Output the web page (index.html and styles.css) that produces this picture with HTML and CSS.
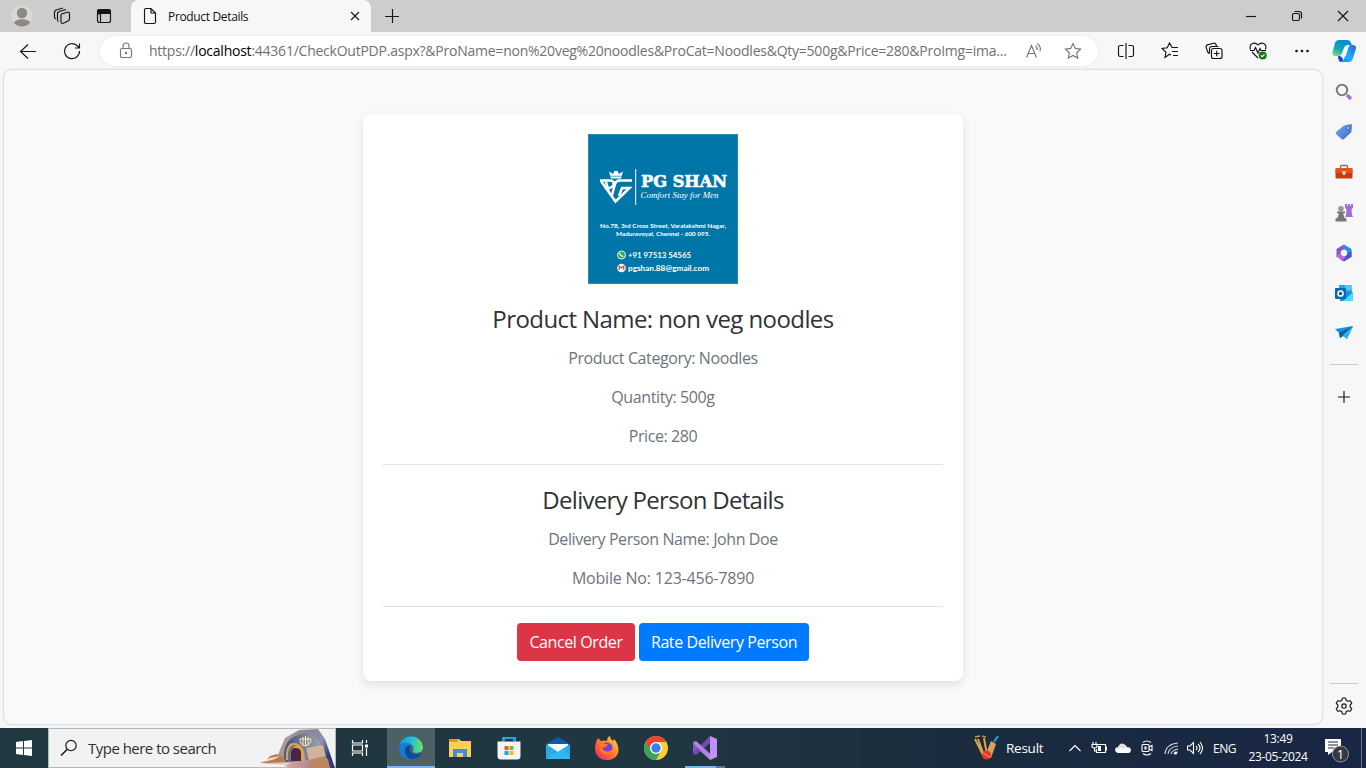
FILE: index.html
```html
<!DOCTYPE html>
<html lang="en">
<head>
<meta charset="utf-8">
<title>Product Details</title>
<link rel="stylesheet" href="styles.css">
</head>
<body>
<div class="screen">
  <header class="titlebar">
    <svg class="avatar" viewBox="0 0 22 22"><circle cx="11" cy="11" r="10.5" fill="#dad8d5"/><circle cx="11" cy="8" r="5.2" fill="#8d8883"/><path d="M3 18c1-5 15-5 16 0c-4 4.500-12 4.500-16 0z" fill="#8d8883"/></svg>
    <svg class="ico workspaces" viewBox="0 0 18 18"><path d="M8.500 7 15 5q1.500 0 1.500 1.500v6L15 14l-5 2.500q-2 0-2-1.500V8zM5.500 14.500q-1-.5-1-2V6l1.500-1.500L13 2.500M3 12q-1.500-.5-1.500-2V4.500L3 3l7-2"/></svg>
    <svg class="ico tabact" viewBox="0 0 18 18"><rect x="2.500" y="2.500" width="13" height="13" rx="2"/><path d="M3 3h12v3.500H3zM3 6h2v1H3z" fill="#111"/><path d="M5.500 6v9"/></svg>
    <div class="tab">
      <svg class="ico page" viewBox="0 0 14 18"><path d="M1.500 3q0-1.500 1.500-1.500h5l4.500 4.500v9q0 1.500-1.500 1.500H3q-1.500 0-1.500-1.500zM8 1.500V6h4.500"/></svg>
      <span class="tabtitle">Product Details</span>
      <svg class="ico close" viewBox="0 0 10 10"><path d="m1 1 8 8m0-8-8 8"/></svg>
    </div>
    <svg class="ico newtab" viewBox="0 0 14 14"><path d="M7.500 0v14M0 7.500h14"/></svg>
    <div class="wincontrols">
      <svg class="ico win" viewBox="0 0 12 12"><path d="M1 6.500h10"/></svg>
      <svg class="ico win" viewBox="0 0 12 12"><rect x="1.500" y="3.500" width="7" height="7" rx="1.500"/><path d="M3.500 1.500H8q2.500 0 2.500 2.500v4.500"/></svg>
      <svg class="ico win" viewBox="0 0 12 12"><path d="m1 1 10 10M11 1 1 11"/></svg>
    </div>
  </header>

  <div class="toolbar">
    <svg class="ico back" viewBox="0 0 18 16"><path d="M17 8.500H1.500M9 1.500l-7.500 7 7.500 7"/></svg>
    <svg class="ico reload" viewBox="0 0 18 18"><path d="M16.500 9a7.500 7.500 0 1 1-2.500-5.500L16.500 6M16.500 1.500V6H12"/></svg>
    <div class="address">
      <svg class="ico grey lock" viewBox="0 0 14 18"><rect x="1.500" y="6.500" width="11" height="9" rx="1.500"/><path d="M4 6.500V4a3 3 0 0 1 6 0v2.500"/><circle cx="7" cy="11" r=".6"/></svg>
      <span class="url">https://<b>localhost</b>:44361/CheckOutPDP.aspx?&amp;ProName=non%20veg%20noodles&amp;ProCat=Noodles&amp;Qty=500g&amp;Price=280&amp;ProImg=ima...</span>
      <svg class="ico grey read" viewBox="0 0 18 16"><path d="m1.500 14.500 5-12 5 12M3.300 10.500h6.500M10.500 3q2 1.500 1.500 4M12 .8q4.500 2.700 3 7.500"/></svg>
      <svg class="ico grey star" viewBox="0 0 18 18"><path d="m9 1.500 2.300 4.900 5.300.7-3.900 3.700 1 5.300L9 13.500l-4.700 2.600 1-5.300-3.900-3.700 5.300-.7z"/></svg>
    </div>
    <div class="tools">
      <svg class="ico" viewBox="0 0 18 18"><path d="M6.500 3.500h-3Q1.500 3.500 1.500 5v8q0 1.500 2 1.500h3m5-11h3q2 0 2 1.500v8q0 1.500-2 1.500h-3M9 1v16"/></svg>
      <svg class="ico" viewBox="0 0 18 18"><path d="m10 13-1.500-.8-4.500 3.300 1-5.200-4-3.800 5.200-.8L8.500 1 11 5.500h6M11 9.500h6M12 13.500h5"/></svg>
      <svg class="ico" viewBox="0 0 18 18"><rect x="6.500" y="6.500" width="10.500" height="10" rx="2"/><path d="M11.700 8.700V14.300M9 11.500h5.500M4.500 11.500Q3 11 2.500 9.500L1.200 5.500q-.6-2 1.300-2.600L8.500 1.200q1.800-.5 2.500 1.300l.5 1.500M4.500 11.500V7q0-2.500 2.500-2.500h6.500"/></svg>
      <svg class="ico" viewBox="0 0 18 18"><path d="m9 16-6-6M1.500 7.500C-.5 1 6-.5 9 3c3-3.500 9.500-2 7.500 4.500M1 8.500h4l1.500-3L9 11l2-4.500 1 2h5"/><circle cx="13.700" cy="13.500" r="4" fill="#107c10" stroke="none"/><path d="m12 13.500 1.300 1.200 2.200-2.400" stroke="#fff"/></svg>
      <svg class="ico" viewBox="0 0 18 18"><g fill="#111" stroke="none"><circle cx="3.500" cy="9" r="1.300"/><circle cx="9" cy="9" r="1.300"/><circle cx="14.500" cy="9" r="1.300"/></g></svg>
    </div>
    <svg class="copilot" viewBox="0 0 24 24"><defs><linearGradient id="cpa" x1="0" y1="1" x2=".5" y2="0"><stop stop-color="#8be66f"/><stop offset=".45" stop-color="#16a9b7"/><stop offset="1" stop-color="#078bd1"/></linearGradient><linearGradient id="cpb" x1="1" y1="0" x2="0" y2="1"><stop stop-color="#2569d9"/><stop offset=".6" stop-color="#20adff"/><stop offset="1" stop-color="#128cff"/></linearGradient></defs><path d="M7 1h8q3 0 4 3l1 2h-4q-3 0-4 3l-2 5q-1 3-4 3H3q-3 0-2.500-4L3 4q1-3 4-3z" fill="url(#cpa)"/><path d="M17 6h4q3.500 0 3 3.500L21 19q-1 4-4 4H9q2 0 3-3l2-5 2-6q.5-3 3-3z" fill="url(#cpb)"/><path d="M6 17h3l2 3q0 3-2 3-3-.5-3-6" fill="#174bd1"/><path d="M14 7h3l-1 3-2 6q-1 2-3 2H8q2-1 3-4l1-4q.5-2 2-3" fill="#f7f7f7"/></svg>
  </div>

  <div class="middle">
    <main class="viewport">
      <section class="card">
        <svg class="productimg" viewBox="0 0 150 150">
          <path fill="#0076a8" d="M0 0h150v150H0z"/>
          <path d="M.5.500h149v149H.500z" fill="none" stroke="#4d98bb" opacity=".6"/>
          <g fill="none" stroke="#fff" stroke-width="2.500">
            <path d="M44 46.500H31.500q-3.500 0-4.500 3.500l-3.500 13M12 46.500h9.500q5 0 4 4-1 3.500-6 3.500h-3M13 47l14.500 20.500L41.500 54H34l-3 8M18 48l3 10"/>
          </g>
          <path d="m21 37.500 4 2.500 1.500-3h3L31 40l4-2.500-2 7H23z" fill="#fff"/><path d="M22.500 42.200h11" stroke="#0076a8" stroke-width=".7"/>
          <path d="M47.700 35v36" stroke="#fff" stroke-width="1"/>
          <text x="53" y="53" class="brand" textLength="86" lengthAdjust="spacingAndGlyphs">PG SHAN</text>
          <text x="52.500" y="64" class="tagline" textLength="78" lengthAdjust="spacingAndGlyphs">Comfort Stay for Men</text>
          <text x="12" y="94" class="addr" textLength="126" lengthAdjust="spacingAndGlyphs">No.78, 3rd Cross Street, Varalakshmi Nagar,</text>
          <text x="28" y="102" class="addr" textLength="94" lengthAdjust="spacingAndGlyphs">Maduravoyal, Chennai - 600 095.</text>
          <circle cx="33.500" cy="121" r="4" fill="#29a94b" stroke="#fff" stroke-width=".9"/><path d="M31.800 119q.5 3 3.500 3.700" stroke="#fff" stroke-width="1.300" fill="none"/>
          <circle cx="33.500" cy="134" r="4.300" fill="#fff"/><path d="M31.200 136v-4l2.300 2 2.300-2v4" stroke="#db4437" stroke-width="1.200" fill="none"/>
          <text x="40" y="124" class="contact" textLength="63" lengthAdjust="spacingAndGlyphs">+91 97513 54565</text>
          <text x="40" y="136.500" class="contact" textLength="81" lengthAdjust="spacingAndGlyphs">pgshan.88@gmail.com</text>
        </svg>
        <h4 class="heading product">Product Name: non veg noodles</h4>
        <p class="detail">Product Category: Noodles</p>
        <p class="detail">Quantity: 500g</p>
        <p class="detail">Price: 280</p>
        <hr class="rule">
        <h4 class="heading delivery">Delivery Person Details</h4>
        <p class="detail">Delivery Person Name: John Doe</p>
        <p class="detail mobile">Mobile No: 123-456-7890</p>
        <hr class="rule">
        <div class="actions">
          <button class="btn danger">Cancel Order</button>
          <button class="btn primary">Rate Delivery Person</button>
        </div>
      </section>
    </main>
    <aside class="sidebar">
      <svg class="side" viewBox="0 0 18 18"><path d="m12 12 4 4" stroke="#a36bd6" stroke-width="3.200"/><circle cx="7" cy="7" r="5.200" fill="none" stroke="#7c7c7c" stroke-width="2"/></svg>
      <svg class="side" viewBox="0 0 18 18"><defs><linearGradient id="tg" x2="1" y2="1"><stop stop-color="#79a8f2"/><stop offset="1" stop-color="#3c68c9"/></linearGradient></defs><path d="m1 9 8-6.500 7-1.500q1 0 1 1l-.5 7L9 16q-1.500 1-2.500 0L1 11q-.7-1 0-2z" fill="url(#tg)"/><circle cx="12.800" cy="5" r="1.500" fill="#fff" stroke="#294fa5"/></svg>
      <svg class="side" viewBox="0 0 18 18"><path d="M5.500 5V3.500q0-1 1-1h5q1 0 1 1V5" fill="none" stroke="#777" stroke-width="1.300"/><rect x=".5" y="5" width="17" height="10.500" rx="1" fill="#c83b0d"/><path d="M1 5h16l.7 5H.3z" fill="#e65518"/><rect x="7.500" y="8" width="3" height="4" rx="1" fill="#d4dce2"/></svg>
      <svg class="side" viewBox="0 0 18 18"><path d="M10 0h2v2h1V0h2v2h1V0h2v4l-1.500 1 .5 6 1 2h-8l1-2 .5-6L10 4z" fill="#a56bd0"/><circle cx="6" cy="4.800" r="2.800" fill="#999"/><path d="M2 7.500h8v1.800H8.200L9 13l2.500 2v2.500H.500V15L3 13l.8-3.700H2z" fill="#777"/></svg>
      <svg class="side" viewBox="0 0 18 18"><path d="M9 .5 1.500 5v8.500L6 11V7l5-3z" fill="#8458cb"/><path d="m9 .5 7.500 4.500v8L12 10.500V7L7 4z" fill="#318be4"/><path d="M16.500 7v6L9 17.500 4.500 15l7.500-4.500z" fill="#4c55d0"/><path d="m1.500 12.500 4.500-6v4L11 13l-4 3.500z" fill="#bd67d9"/><path d="m9 6 3 1.700v3L9 12.500l-3-1.800v-3z" fill="#f8f8fb"/></svg>
      <svg class="side" viewBox="0 0 18 18"><path d="M4 1h13v10H4z" fill="#28a8ea"/><path d="M10 1h7v5h-7z" fill="#50c9f4"/><path d="M5 8h13v9H5z" fill="#1490df"/><path d="m18 8-10 9h10z" fill="#50d9ff"/><rect y="4" width="11" height="11" rx="1" fill="#0868b8"/><circle cx="5.500" cy="9.500" r="2.600" fill="none" stroke="#fff" stroke-width="1.500"/></svg>
      <svg class="side" viewBox="0 0 18 18"><path d="M0 5 18 2l-6 13-4-3-3 2-1-5z" fill="#1592df"/><path d="M4 9 18 2 8 12l-3 2z" fill="#075f9f"/><path d="m8 11 10-9-6 13z" fill="#2cb4ef"/></svg>
      <hr class="siderule">
      <svg class="ico sideplus" viewBox="0 0 14 14"><path d="M7 1v12M1 7h12"/></svg>
      <div class="sidebottom">
        <hr class="siderule">
        <svg class="ico gear" viewBox="0 0 18 18"><path d="M7.500 1h3l.7 2.300 1.700 1 2.400-.6 1.500 2.600L15.100 8v2l1.700 1.700-1.500 2.600-2.400-.6-1.700 1-.7 2.300h-3l-.7-2.300-1.700-1-2.400.6-1.500-2.600L2.900 10V8L1.200 6.300l1.500-2.600 2.400.6 1.700-1z" stroke-linejoin="round"/><circle cx="9" cy="9" r="2.200"/></svg>
      </div>
    </aside>
  </div>

  <footer class="taskbar">
    <div class="start"><svg viewBox="0 0 16 16"><path d="m0 2 7-1v6.500H0zM8 .900 16 0v7.500H8zM0 8.500h7V15l-7-1zM8 8.500h8V16l-8-1.100z" fill="#fff"/></svg></div>
    <div class="search">
      <svg class="ico mag" viewBox="0 0 18 18"><circle cx="11" cy="6.500" r="5.200"/><path d="M7.300 10.200 1 16.500" stroke-width="1.500"/></svg>
      <span class="searchtext">Type here to search</span>
      <svg class="art" viewBox="0 0 76 39"><defs><linearGradient id="arch" x2="1" y2=".3"><stop stop-color="#c2ab9c"/><stop offset=".5" stop-color="#8a8494"/><stop offset=".8" stop-color="#8d8fae"/><stop offset="1" stop-color="#303b78"/></linearGradient><linearGradient id="ground" x2="1"><stop stop-color="#e7c0a7"/><stop offset="1" stop-color="#a5788f"/></linearGradient><linearGradient id="inner" x2="1"><stop stop-color="#3f5285"/><stop offset="1" stop-color="#a9adb0"/></linearGradient></defs>
        <path d="M18 28 26 9 40 1l19-1 7 10 10 29H35L19 34z" fill="url(#arch)"/><path d="M25 28q0-21 19-23 15-2 20 17l2 12H27z" fill="url(#inner)"/><path d="m47 19 17-3 3 12-17 3z" fill="#d0b29d"/>
        <path d="M27 31q-1-18 9-17 10 1 10 18z" fill="#dda150"/><path d="M29 31q-1-16 8-15l-5 5v10z" fill="#6c6b91"/><path d="M32 32v-8q0-5 4-5 6 0 6 5v8z" fill="#492444"/><path d="M41 10h11m-11 0q0 6 5 7 6-1 6-7M44 8v8m2.500-9v10M49 8v8" stroke="#fff0b0" stroke-width="1" fill="none"/>
        <path d="m1 34 7-3 3-4 7-2 8 5-2 4 8 1 15-2 7 2-5 4H31l-7-4z" fill="#b77850"/><path d="m7 34 19-1 15-1 16-2 7 9H30l-4-3z" fill="url(#ground)"/><path d="m10 35 22-1-5 2zM2 34l9-5 10-2-5 3z" fill="#f4dfcc"/><path d="m47 39 7-9 12-3 7 8v4z" fill="#bd8663"/><path d="m68 25 8 14h-5z" fill="#303b78"/></svg>
    </div>
    <div class="taskview"><svg viewBox="0 0 18 18"><path d="M1.500 1v3h10V1M1.500 17v-3h10v3M1.500 6h10v6h-10zM15.500 1v3m0 5v8" stroke="#fff" fill="none" stroke-width="1.200"/><path d="M14 5.500h3v3h-3z" fill="#fff"/></svg></div>
    <div class="apps">
      <div class="app active"><svg viewBox="0 0 24 24"><defs><linearGradient id="eg" x2="1"><stop stop-color="#1597dc"/><stop offset=".55" stop-color="#28c2cd"/><stop offset="1" stop-color="#70e84c"/></linearGradient></defs><circle cx="12" cy="12" r="12" fill="#137ed4"/><path d="M1 8C4-2 22-3 24 11q0 6-7 6-5 0-3-3c2-6-6-9-13-6z" fill="url(#eg)"/><path d="M6 15q0-6 6-6c-3 6 2 12 11 8-4 8-17 9-17-2z" fill="#0d4b95"/><path d="M12 9c-3 6 1 11 8 9l4-1V12q0 5-7 5-4 0-3-3 1-3-2-5z" fill="#4d6066"/></svg></div>
      <div class="app"><svg viewBox="0 0 24 24"><path d="M1 3h10l2 2h10v16H1z" fill="#ffcf55"/><path d="M1 3h9v3H1z" fill="#df9d1c"/><path d="M5 21v-8h14v8h-4v-4H9v4z" fill="#3f91d1"/></svg></div>
      <div class="app"><svg viewBox="0 0 24 24"><path d="M6 7V2h12v5" fill="none" stroke="#27a2db" stroke-width="2"/><path d="M.5 5.500h23V20q0 3.500-3 3.500h-17Q.5 23.500.5 20z" fill="#f4f4f4"/><path d="M6 5.500V2h2v3.500zm10 0V2h2v3.500z" fill="#27a2db"/><path d="M7.500 10h4v4h-4z" fill="#ed5530"/><path d="M12.500 10h4v4h-4z" fill="#7bb92c"/><path d="M7.500 15h4v4h-4z" fill="#1da2e3"/><path d="M12.500 15h4v4h-4z" fill="#f5b81b"/></svg></div>
      <div class="app"><svg viewBox="0 0 24 24"><path d="m0 8 12-7 12 7v5H0z" fill="#0c5cad"/><path d="M2 8h20v8H2z" fill="#f5f8fb"/><path d="m0 8 12 8 12-8v15H0z" fill="#29a9e8"/><path d="m0 23 18-11 6 11z" fill="#2eb9f2"/></svg></div>
      <div class="app"><svg viewBox="0 0 24 24"><defs><linearGradient id="ff" x1="1" x2="0" y2="1"><stop stop-color="#ffe037"/><stop offset=".5" stop-color="#ff792a"/><stop offset="1" stop-color="#ed167c"/></linearGradient></defs><path d="M3 2q2 2 3 3 4-1 6 0Q12 1 15 0q0 3 3 5l1-2c8 9 5 21-7 21S-3 12 3 2z" fill="url(#ff)"/><circle cx="12" cy="12" r="5.500" fill="#793cdc"/><path d="M5 8h8l-2 3-4 1c3 5 9 4 11 0 0 8-11 9-14 1z" fill="#ff7b24"/></svg></div>
      <div class="app"><svg viewBox="0 0 24 24"><circle cx="12" cy="12" r="12" fill="#ffcd32"/><path d="M1.600 6A12 12 0 0 1 22.400 6H12a6 6 0 0 0-5 9z" fill="#ea4335"/><path d="M1.600 6A12 12 0 0 0 12 24l5-9q-6 4-10-1z" fill="#36a852"/><circle cx="12" cy="12" r="6" fill="#fff"/><circle cx="12" cy="12" r="4.700" fill="#397ff0"/></svg></div>
      <div class="app running"><svg viewBox="0 0 24 24"><path d="m0 6 3-1 15 13v6L4 13l-1 6-3-2z" fill="#8655bf"/><path d="m0 17 17-17v7L3 19z" fill="#774aab"/><path d="m17 0 7 3v18l-7 3z" fill="#c290fa"/><path d="m3 5 14 13v6L0 7z" fill="#b184df"/></svg></div>
    </div>
    <div class="news"><svg viewBox="0 0 26 26"><path d="m4 4 7 19M10 3l3 17M1 4l8 16" stroke="#daa04d" stroke-width="2"/><path d="m1 2 5-1m2 0 4 1" stroke="#c9924a" stroke-width="1.500"/><path d="m17 6 5 3-5 14-6-2z" fill="#dba05a"/><path d="m20 7 4-6" stroke="#299bec" stroke-width="2"/><circle cx="12.500" cy="20" r="4.500" fill="#e73725"/><path d="m9 18 7 4" stroke="#ff9b7b"/></svg><span>Result</span></div>
    <div class="tray">
      <svg viewBox="0 0 16 16"><path d="m2.500 11 5.500-5.500 5.500 5.500"/></svg>
      <svg viewBox="0 0 16 16"><path d="M5.500 4.500h9v8h-9V9M14.500 7h1v3h-1M2 2v3m3-3v3M1 4.500h5V7Q3.500 9 1 7zM3.500 8v3h2"/><path d="M7 6h3v5H7z" fill="#fff" stroke="none"/></svg>
      <svg viewBox="0 0 16 16"><path d="M3 13q-3-1-3-3.500T3 7q2-5 6-3 2 1 3 3 4 0 4 3t-3 3z" fill="#dedfe1" stroke="none"/><path d="M3 13Q1 12 1 10q4-3 7-1 4-3 7 0 1 3-2 4z" fill="#fff" stroke="none"/></svg>
      <svg viewBox="0 0 16 16"><rect x="3" y="4.500" width="7" height="7" rx="1"/><path d="m10 7 3-1.500v5L10 9M4 2.500q4-3 8 0M4 13.500q4 3 8 0"/><path d="M6 7h1v2H6z"/></svg>
      <svg viewBox="0 0 16 16"><path d="M2 14Q3 4 15 3M5 14q1-7 10-8M8 14q1-4 7-5M11 14q1-2 4-2" opacity=".8"/><circle cx="12.500" cy="13" r="1.500" fill="#fff" stroke="none"/></svg>
      <svg viewBox="0 0 16 16"><path d="M.5 6H3l3.500-3.500v11L3 10H.500zM9 6q2 2 0 4m2-6q4 4 0 8m2-10q5 6 0 12"/></svg>
    </div>
    <span class="lang">ENG</span>
    <div class="clock"><span>13:49</span><span class="date">23-05-2024</span></div>
    <div class="notif"><svg viewBox="0 0 26 26"><path d="M1 2h16v13H8l-4 3v-3H1z" fill="#fff"/><path d="M4 5h10M4 8h10M4 11h6" stroke="#1a2941"/><circle cx="16.500" cy="17" r="8" fill="#35383f" stroke="#92969e"/><text x="16.500" y="21.500" class="badge">1</text></svg></div>
  </footer>
</div>
</body>
</html>
```
FILE: styles.css
```css
*{box-sizing:border-box}
body{margin:0;font-family:"Open Sans","Noto Sans",sans-serif;color:#212529;overflow:hidden}
.screen{width:1366px;height:768px;display:flex;flex-direction:column;background:#f7f7f7}
svg{display:block;flex:none}
.ico{fill:none;stroke:#161616;stroke-width:1.15;width:18px;height:18px}
.grey{stroke:#767676}
.titlebar{height:32px;flex:none;display:flex;align-items:center;background:#cdcdcd}
.avatar{width:22px;height:22px;margin-left:11px}
.workspaces{margin-left:20px}
.tabact{margin-left:24px}
.tab{width:240px;height:32px;margin-left:18px;background:#f7f7f7;border-radius:8px 8px 0 0;display:flex;align-items:center;padding-left:12px}
.page{width:14px;height:18px}
.tabtitle{font-size:12px;letter-spacing:-.34px;margin-left:11px;width:176px;color:#111;white-space:nowrap}
.close{width:10px;height:10px;margin-left:6px}
.newtab{width:14px;height:14px;margin-left:14px}
.wincontrols{margin-left:auto;display:flex;gap:34px;padding-right:17px}
.win{width:12px;height:12px}
.toolbar{height:37px;flex:none;display:flex;align-items:center}
.back{height:16px;margin-left:19px}
.reload{margin-left:26px}
.address{width:998px;height:30px;margin-left:19px;border-radius:15px;background:#fff;display:flex;align-items:center;box-shadow:0 0 3px #e3e3e3}
.lock{width:14px;margin-left:19px}
.url{font-size:14px;letter-spacing:-.238px;white-space:nowrap;color:#717171;margin-left:16px;width:860px}
.url b{font-weight:400;color:#000}
.read{height:16px;margin-left:16px}
.star{margin-left:21px}
.tools{display:flex;gap:26px;margin-left:19px}
.copilot{width:24px;height:24px;margin-left:21px}
.middle{height:659px;flex:none;display:flex}
.viewport{width:1320px;height:656px;margin-left:3px;padding-top:44px;border:1px solid #e0e1e3;border-radius:9px;background:#f8f9fb;box-shadow:0 0 2px #ddd}
.card{width:600px;height:567px;margin-left:359px;background:#fff;border-radius:8px;box-shadow:0 4px 8px rgba(0,0,0,.1);padding:20px;text-align:center}
.productimg{width:150px;height:150px;margin:0 auto}
.brand{font:900 16px "DejaVu Serif",serif;fill:#fff;stroke:#fff;stroke-width:.6px}
.tagline{font:italic 8.500px "Liberation Serif",serif;fill:#fff}
.addr{font:700 6.300px Lato,sans-serif;fill:#fff}
.contact{font:700 7.500px Lato,sans-serif;fill:#fff}
.heading{font-size:24px;line-height:36px;font-weight:400;margin:0 0 9px;color:#2f3336}
.product{margin-top:17px;letter-spacing:-.58px}
.delivery{letter-spacing:-.7px}
.detail{font-size:16px;line-height:24px;margin:0 0 15px;letter-spacing:-.4px;color:#6c757d}
.mobile{letter-spacing:-.2px}
.rule{height:1px;border:0;background:#e3e3e3;margin:16px 0 17px}
.actions{display:flex;justify-content:center;gap:4px;margin-top:-1px}
.btn{height:38px;padding:0;border:0;border-radius:4px;color:#fff;font-family:inherit;font-size:16px;letter-spacing:-.4px;white-space:nowrap}
.danger{width:118px;background:#dc3545}
.primary{width:170px;background:#007bff}
.sidebar{width:43px;height:659px;display:flex;flex-direction:column;align-items:center;padding:14px 2px 0 0}
.side{width:18px;height:18px;margin-bottom:22.200px}
.siderule{width:28px;height:1px;border:0;background:#c8c8c8;margin:0}
.sideplus{width:14px;height:14px;margin-top:25px}
.sidebottom{margin-top:auto;padding-bottom:13px;display:flex;flex-direction:column;align-items:center}
.gear{margin-top:13px}
.taskbar{height:40px;flex:none;display:flex;align-items:center;background:linear-gradient(90deg,#203840,#203640 50%,#1a2c3e 70%,#192644);color:#fff}
.start{width:48px;padding-left:16px}
.start svg{width:16px;height:16px}
.search{width:288px;height:40px;background:#f2f2f2;border:1px solid #b5b7b8;display:flex;align-items:center}
.mag{margin-left:11px}
.searchtext{font-size:15px;letter-spacing:-.52px;color:#303030;margin-left:10px;width:170px;white-space:nowrap}
.art{width:76px;height:39px;margin-left:1px}
.taskview{width:51px;padding-left:15px}
.taskview svg{width:18px;height:18px}
.apps{display:flex;gap:1px}
.app{width:48px;height:40px;display:flex;align-items:center;justify-content:center}
.app svg{width:24px;height:24px}
.active{background:linear-gradient(#4d6066 38px,#76b9ed 38px)}
.running{background:linear-gradient(90deg,transparent 4px,#76b9ed 4px 35px,#517d9c 35px 44px,transparent 44px) bottom/100% 2px no-repeat}
.news{display:flex;align-items:center;width:93px;margin-left:245px;font-size:13.500px;letter-spacing:-.25px;gap:6px}
.news svg{width:26px;height:26px}
.tray{display:flex;gap:8px}
.tray svg{width:16px;height:16px;fill:none;stroke:#fff;stroke-width:1.1}
.lang{font-size:12px;margin-left:10px;width:24px;letter-spacing:-.5px}
.clock{width:64px;margin-left:9px;display:flex;flex-direction:column;align-items:center;font-size:12px;line-height:18px;letter-spacing:-.35px;white-space:nowrap}
.notif{width:38px;margin-left:14px;border-right:1px solid #68758a;height:40px;display:flex;align-items:center;padding-top:3px}
.notif svg{width:26px;height:26px}
.badge{font:13px "Open Sans",sans-serif;fill:#fff;text-anchor:middle}
```
